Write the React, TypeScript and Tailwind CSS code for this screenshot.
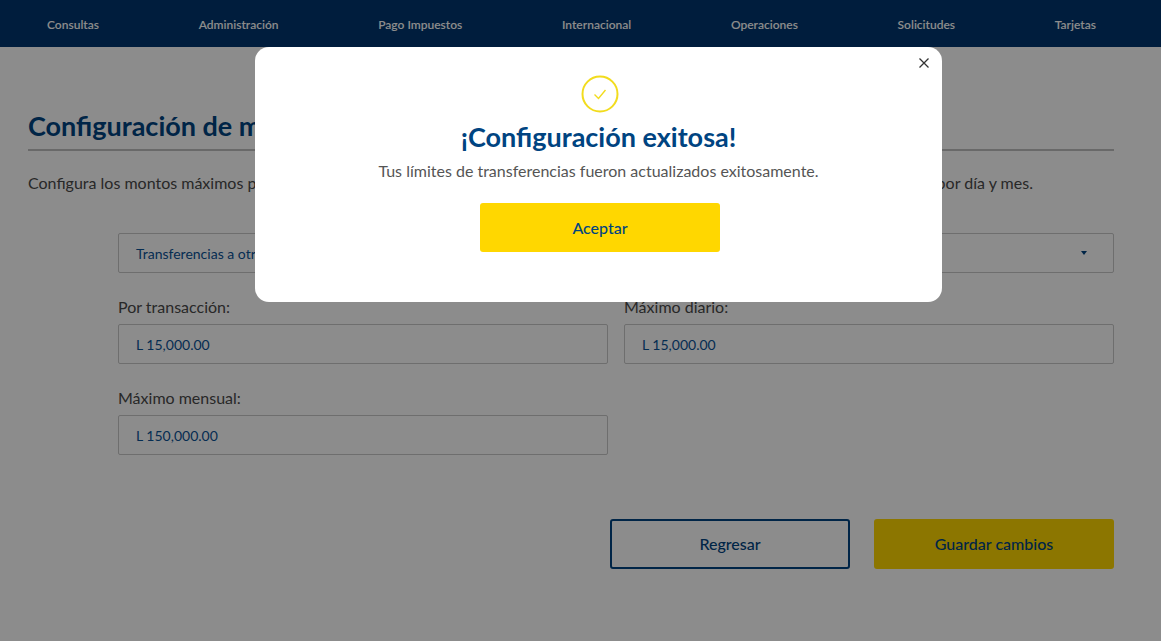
import React from "react";

const navItems = ["Consultas", "Administración", "Pago Impuestos", "Internacional", "Operaciones", "Solicitudes", "Tarjetas"];

function Field({ label, value }: { label: string; value: string }) {
  return (
    <div className="flex flex-col">
      <label className="text-[16px] leading-[20px] text-[#4a4a4a] mb-[7px]">{label}</label>
      <div className="h-[40px] border border-[#c8c8c8] rounded-[2px] bg-white pl-[17px] flex items-center text-[14px] text-[#0a5296]">{value}</div>
    </div>
  );
}

export default function App() {
  return (
    <div className="relative h-[641px] w-[1161px] overflow-hidden bg-white text-[#4a4a4a]" style={{ fontFamily: "Lato, sans-serif" }}>
      <nav className="h-[47px] bg-[#003670] pt-[2px] pl-[47px] pr-[65px] flex items-center justify-between text-[12px] font-semibold text-white">
        {navItems.map((n) => (
          <span key={n}>{n}</span>
        ))}
      </nav>

      <main className="pl-[28px]">
        <h1 className="mt-[61px] text-[27px] leading-[36px] font-bold text-[#004481] border-b-2 border-[#c0c0c0] w-[1086px] pb-[5px]">Configuración de montos máximos</h1>
        <p className="mt-[22px] text-[16px] leading-[20px] whitespace-nowrap">Configura los montos máximos permitidos para tus transferencias a otras cuentas, estableciendo el monto límite por transacción y por día y mes.</p>

        <div className="ml-[90px] w-[996px] mt-[40px]">
          <div className="h-[40px] border border-[#c8c8c8] rounded-[2px] bg-white pl-[17px] pr-[26px] flex items-center justify-between text-[14px] text-[#0a5296]">
            <span>Transferencias a otros bancos</span>
            <span className="w-0 h-0 border-x-[3.5px] border-x-transparent border-t-[4px] border-t-[#004481]" />
          </div>
          <div className="grid grid-cols-2 gap-x-[16px] gap-y-[24px] mt-[24px]">
            <Field label="Por transacción:" value="L 15,000.00" />
            <Field label="Máximo diario:" value="L 15,000.00" />
            <Field label="Máximo mensual:" value="L 150,000.00" />
          </div>
          <div className="flex justify-end gap-[24px] mt-[64px]">
            <button className="w-[240px] h-[50px] border-2 border-[#004481] rounded-[3px] text-[16px] font-medium text-[#004481]">Regresar</button>
            <button className="w-[240px] h-[50px] bg-[#ffd700] rounded-[3px] text-[16px] font-medium text-[#004481]">Guardar cambios</button>
          </div>
        </div>
      </main>

      <div className="fixed inset-0 bg-[rgba(0,0,0,0.45)]">
        <div className="absolute left-[255px] top-[47px] w-[687px] h-[255px] bg-white rounded-[14px] flex flex-col items-center pt-[28px]">
          <button className="absolute right-[12px] top-[10px] text-[#333]">
            <svg width="12" height="12" viewBox="0 0 12 12" fill="none" stroke="currentColor" strokeWidth="1.3">
              <path d="M1.5 1.5 10.5 10.5M10.5 1.5 1.5 10.5" />
            </svg>
          </button>
          <svg width="38" height="38" viewBox="0 0 38 38" fill="none" stroke="#f2dc1e" className="shrink-0 ml-[2px]">
            <circle cx="19" cy="19" r="17.5" strokeWidth="2" />
            <path d="M13.5 19.5 17.5 23.5 24.5 15" strokeWidth="1.4" />
          </svg>
          <h2 className="mt-[4px] text-[27px] leading-[40px] font-bold text-[#004481]">¡Configuración exitosa!</h2>
          <p className="mt-[4px] text-[16px] leading-[20px] text-[#555555]">Tus límites de transferencias fueron actualizados exitosamente.</p>
          <button className="mt-[22px] ml-[2px] w-[240px] h-[49px] pt-[1px] pl-[1px] bg-[#ffd700] rounded-[3px] text-[16px] font-medium text-[#004481]">Aceptar</button>
        </div>
      </div>
    </div>
  );
}
